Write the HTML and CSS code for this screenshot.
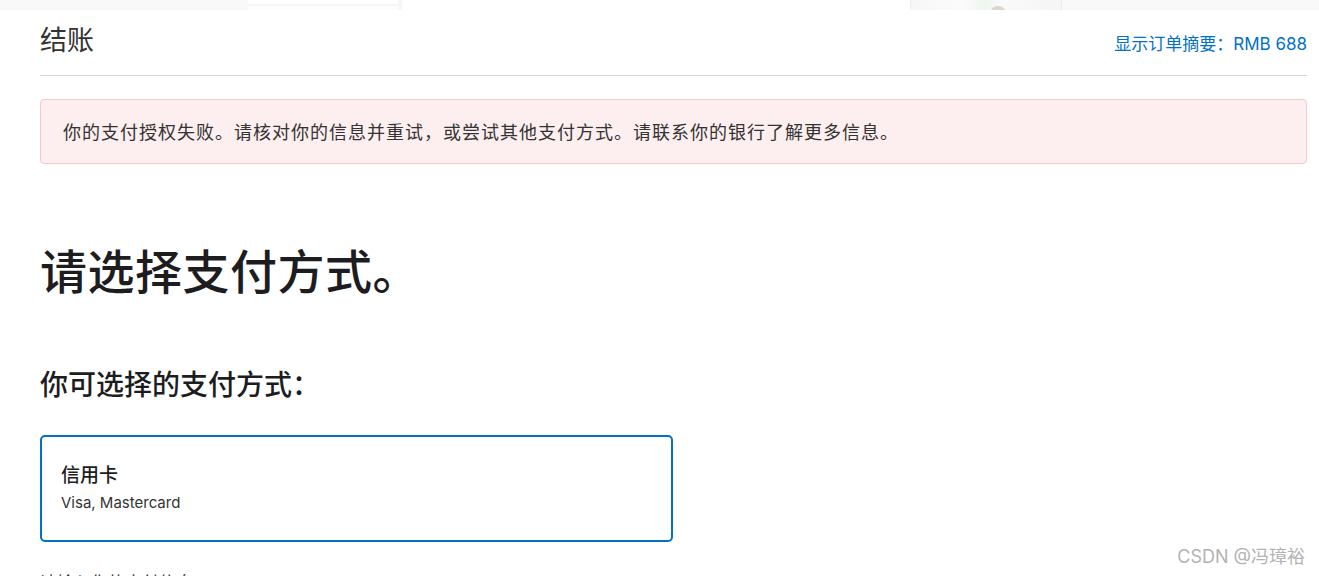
FILE: index.html
```html
<!DOCTYPE html>
<html lang="zh-CN">
<head>
<meta charset="utf-8">
<title>结账</title>
<link rel="stylesheet" href="styles.css">
</head>
<body>
<div class="topstrip">
  <div class="ts-gray ts-left"></div>
  <div class="ts-box"></div>
  <div class="ts-sep"></div>
  <div class="ts-white"></div>
  <div class="ts-image"><span class="ts-blob"></span></div>
  <div class="ts-gray ts-right"></div>
</div>
<main class="page">
  <header class="checkout-header">
    <h1 class="checkout-title">结账</h1>
    <a class="summary-link" href="#">显示订单摘要：RMB 688</a>
  </header>
  <div class="alert">你的支付授权失败。请核对你的信息并重试，或尝试其他支付方式。请联系你的银行了解更多信息。</div>
  <h2 class="main-heading">请选择支付方式。</h2>
  <h3 class="sub-heading">你可选择的支付方式：</h3>
  <div class="pay-option">
    <div class="pay-name">信用卡</div>
    <div class="pay-desc">Visa, Mastercard</div>
  </div>
  <p class="enter-info">请输入你的支付信息。</p>
</main>
<div class="watermark">CSDN @冯璋裕</div>
</body>
</html>
```
FILE: styles.css
```css
html, body {
  margin: 0;
  padding: 0;
  background: #fff;
  height: 576px;
  overflow: hidden;
}
body {
  font-family: Inter, "Noto Sans CJK SC", sans-serif;
  color: #333;
  position: relative;
}
.topstrip {
  display: flex;
  height: 10px;
}
.ts-gray { background: #f9f9f9; }
.ts-left { width: 248px; }
.ts-right { flex: 1; }
.ts-box {
  width: 150px;
  background: linear-gradient(#fff 0 4px, #f6f6f6 4px 6px, #fdfdfd 6px);
}
.ts-sep { width: 4px; background: #f6f6f6; }
.ts-white { width: 508px; background: #fff; }
.ts-image {
  width: 150px;
  background: linear-gradient(100deg, #f7f7f7 0%, #fbfbfb 35%, #eef5ee 50%, #fafafa 60%, #f5f5f5 100%);
  border-left: 1px solid #ececec;
  border-right: 1px solid #ececec;
  position: relative;
  overflow: hidden;
}
.ts-blob {
  position: absolute;
  left: 80px;
  top: 6px;
  width: 14px;
  height: 10px;
  border-radius: 50%;
  background: #ddd5cf;
}
.page {
  width: 1267px;
  margin-left: 40px;
}
.checkout-header {
  display: flex;
  justify-content: space-between;
  align-items: baseline;
  border-bottom: 1px solid #d6d6d6;
  box-sizing: border-box;
  height: 66px;
}
.checkout-title {
  margin: 0;
  padding-top: 13px;
  font-size: 27px;
  font-weight: 400;
  line-height: 36px;
  color: #333;
}
.summary-link {
  font-size: 17px;
  color: #0070c9;
  text-decoration: none;
}
.alert {
  margin-top: 23px;
  height: 65px;
  box-sizing: border-box;
  display: flex;
  align-items: center;
  padding: 0 22px 2px;
  background: #fdeeef;
  border: 1px solid #f5c9cd;
  border-radius: 4px;
  font-size: 18px;
  letter-spacing: 1px;
  color: #333;
}
.main-heading {
  margin: 80px 0 0;
  font-size: 47px;
  line-height: 56px;
  font-weight: 500;
  letter-spacing: 0.5px;
  color: #1d1d1f;
}
.sub-heading {
  margin: 67px 0 0;
  font-size: 28px;
  line-height: 36px;
  font-weight: 500;
  color: #1d1d1f;
}
.pay-option {
  margin-top: 32px;
  width: 633px;
  height: 107px;
  box-sizing: border-box;
  border: 2px solid #0070c9;
  border-radius: 5px;
  padding: 26px 19px 0;
}
.pay-name {
  font-size: 19px;
  line-height: 26px;
  font-weight: 500;
  color: #1d1d1f;
}
.pay-desc {
  margin-top: 4px;
  font-size: 15px;
  line-height: 20px;
  color: #333;
}
.enter-info {
  margin: 29px 0 0;
  font-size: 17px;
  line-height: 24px;
  color: #333;
}
.watermark {
  position: absolute;
  right: 14px;
  top: 544px;
  font-size: 18px;
  line-height: 26px;
  color: #b3b3b3;
}
```
